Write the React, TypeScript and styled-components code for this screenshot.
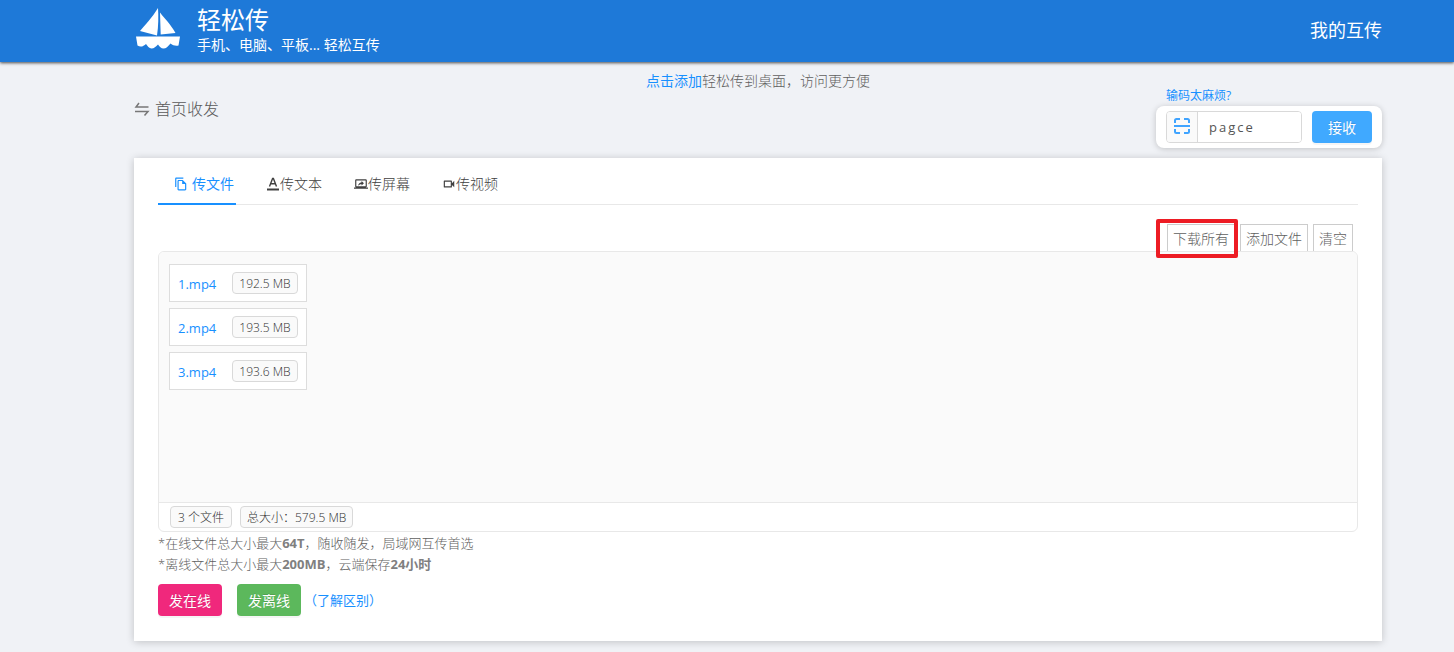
import React from 'react';
import styled, { createGlobalStyle } from 'styled-components';
import {
  MdOutlineFileCopy,
  MdOutlineScreenShare,
  MdOutlineVideocam,
} from 'react-icons/md';

const GlobalStyle = createGlobalStyle`
  *, *::before, *::after { box-sizing: border-box; }
  body {
    margin: 0;
    background: #f0f2f6;
    color: #595959;
    font-family: "Open Sans", "Noto Sans CJK SC", sans-serif;
    font-size: 14px;
    font-weight: 300;
    line-height: 22px;
  }
  a { color: #1890ff; font-weight: 400; text-decoration: none; }
  button, input { font-family: inherit; font-weight: inherit; }
`;

const Header = styled.header`
  display: flex;
  align-items: center;
  justify-content: space-between;
  height: 62px;
  padding: 0 72px 2px 134px;
  background: #1e79d8;
  color: #fff;
  box-shadow: 0 1px 3px rgba(0, 0, 0, 0.7);
`;

const Brand = styled.a`
  display: flex;
  align-items: center;
  gap: 15px;
  color: #fff;
`;

const BrandName = styled.div`
  font-size: 24px;
  line-height: 30px;
`;

const BrandNote = styled.div`
  font-size: 14px;
  line-height: 20px;
`;

const HeaderLink = styled.a`
  color: #fff;
  font-size: 18px;
  line-height: 28px;
`;

const Main = styled.main`
  padding: 8px 72px 11px 134px;
`;

const Notice = styled.p`
  margin: 0;
  text-align: center;
  color: #606060;
`;

const TopRow = styled.div`
  display: flex;
  justify-content: space-between;
  align-items: flex-start;
  margin-bottom: 10px;
`;

const Crumb = styled.h1`
  display: flex;
  align-items: center;
  gap: 5px;
  margin: 6px 0 0;
  font-size: 16px;
  font-weight: 300;
  line-height: 22px;
`;

const Receive = styled.form`
  margin-top: -6px;
`;

const HelpLink = styled.a`
  display: block;
  padding-left: 10px;
  font-size: 12px;
  line-height: 20px;
`;

const ReceiveBox = styled.div`
  display: flex;
  gap: 10px;
  padding: 5px 10px;
  border-radius: 8px;
  background: #fff;
  box-shadow: 0 1px 6px rgba(0, 0, 0, 0.2);
`;

const CodeGroup = styled.div`
  display: flex;
  width: 136px;
  height: 32px;
  border: 1px solid #d9d9d9;
  border-radius: 4px;
  overflow: hidden;
`;

const ScanButton = styled.button`
  display: flex;
  align-items: center;
  justify-content: center;
  flex: none;
  width: 31px;
  padding: 0 0 2px;
  border: 0;
  border-right: 1px solid #d9d9d9;
  background: #fafafa;
  color: #40a4ff;
`;

const CodeInput = styled.input`
  flex: 1;
  min-width: 0;
  padding: 0 11px;
  border: 0;
  outline: 0;
  background: #fff;
  color: #555;
  font-size: 13px;
  font-weight: 400;
  letter-spacing: 2px;
`;

const Button = styled.button<{ $color: string; $width: number }>`
  width: ${(p) => p.$width}px;
  height: 32px;
  padding: 2px 0 0;
  border: 0;
  border-radius: 4px;
  background: ${(p) => p.$color};
  color: #fff;
  font-size: 14px;
  font-weight: 400;
  line-height: 30px;
  text-shadow: 0 -1px 0 rgba(0, 0, 0, 0.12);
  box-shadow: 0 2px 0 rgba(0, 0, 0, 0.04);
`;

const Card = styled.section`
  padding: 6px 24px 25px;
  background: #fff;
  box-shadow: 0 1px 8px rgba(0, 0, 0, 0.2);
`;

const Tabs = styled.div`
  display: flex;
  gap: 32px;
  height: 41px;
  padding-left: 16px;
  border-bottom: 1px solid #e8e8e8;
`;

const Tab = styled.button<{ $active?: boolean }>`
  position: relative;
  display: flex;
  align-items: center;
  gap: ${(p) => (p.$active ? 4 : 0)}px;
  height: 41px;
  padding: 0 0 2px;
  border: 0;
  background: none;
  color: ${(p) => (p.$active ? '#1890ff' : '#404040')};
  font-size: 14px;
  font-weight: ${(p) => (p.$active ? 400 : 300)};
  line-height: 22px;

  &::after {
    content: '';
    display: ${(p) => (p.$active ? 'block' : 'none')};
    position: absolute;
    left: -16px;
    right: -2px;
    bottom: 0;
    height: 2px;
    background: #1890ff;
  }
`;

const Toolbar = styled.div`
  display: flex;
  justify-content: flex-end;
  gap: 5px;
  margin-top: 19px;
  padding-right: 5px;
`;

const ToolButton = styled.button`
  position: relative;
  height: 27px;
  padding: 2px 5px 0;
  border: 1px solid #ccc;
  border-bottom: 0;
  background: #fff;
  color: #606060;
  font-size: 14px;
  line-height: 24px;
`;

const Highlight = styled.span`
  position: absolute;
  top: -6px;
  left: -12px;
  width: 82px;
  height: 39px;
  border: 4px solid #ed1c24;
  border-radius: 2px;
  pointer-events: none;
`;

const Panel = styled.div`
  border: 1px solid #e8e8e8;
  border-radius: 6px;
  background: #fff;
  overflow: hidden;
`;

const FileList = styled.ul`
  display: flex;
  flex-direction: column;
  align-items: flex-start;
  gap: 6px;
  min-height: 251px;
  margin: 0;
  padding: 12px 10px;
  border-bottom: 1px solid #e8e8e8;
  background: #fafafa;
  list-style: none;
`;

const FileItem = styled.li`
  display: flex;
  align-items: center;
  gap: 16px;
  height: 38px;
  padding: 0 8px;
  border: 1px solid #ddd;
  background: #fff;
`;

const FileLink = styled.a`
  padding-top: 2px;
  font-size: 13px;
`;

const Tag = styled.span`
  min-width: 62px;
  height: 22px;
  padding: 1px 6px 0;
  border: 1px solid #d9d9d9;
  border-radius: 4px;
  background: #fafafa;
  color: #303030;
  font-size: 12px;
  line-height: 20px;
  text-align: center;
  white-space: nowrap;
`;

const Summary = styled.div`
  display: flex;
  gap: 8px;
  padding: 3px 11px;
`;

const Hints = styled.div`
  padding-top: 1px;
`;

const Hint = styled.p`
  margin: 0;
  color: #606060;
  font-size: 13px;
  line-height: 21px;

  b {
    color: #808080;
    font-weight: 700;
  }
`;

const Actions = styled.div`
  display: flex;
  align-items: center;
  gap: 15px;
  margin-top: 9px;
`;

const DiffLink = styled.a`
  margin-left: -12px;
  font-size: 13px;
`;

const BoatLogo = () => (
  <svg width="48" height="44" viewBox="0 0 48 44" fill="#fff" aria-hidden="true">
    <path d="M24 0C18 10 11 17 6 23L23 27.500C24.500 18 24.500 8 24 0Z" />
    <path d="M26 4.500L26.700 26.500L41.500 25C36.500 16 31 11 26 4.500Z" />
    <path d="M2 28.500H46L44.500 37.500C41.500 38 39 37.500 36.500 35.500C34 38.500 32 40.500 29.500 40.500C27 40.500 25.500 38.500 24 36.500C22 38.500 20 40.500 17.500 40.500C15 40.500 13.500 38 12 36C9.500 38.500 6.500 39.500 3.500 37.500Z" />
  </svg>
);

const SwapIcon = () => (
  <svg width="16" height="16" viewBox="0 0 16 16" fill="none" stroke="#777" aria-hidden="true">
    <path d="M5 2L2 6H14.500M1 10.500H14L10.500 14.500" strokeWidth="1.500" />
  </svg>
);

const ScanIcon = () => (
  <svg width="18" height="18" viewBox="0 0 18 18" fill="none" stroke="currentColor" strokeWidth="2" aria-hidden="true">
    <path d="M2 6V3.500Q2 2 3.500 2H7M11 2H14.500Q16 2 16 3.500V6M2 12V14.500Q2 16 3.500 16H7M11 16H14.500Q16 16 16 14.500V12M1 9H17" />
  </svg>
);

const TextIcon = ({ size }: { size: number }) => (
  <svg width={size} height={size} viewBox="0 0 14 14" fill="none" stroke="currentColor" aria-hidden="true">
    <path d="M3.500 9.500L6.600 1.500H7.400L10.500 9.500M4.700 6.800H9.300" strokeWidth="1.400" />
    <path d="M1 12.500H13" strokeWidth="2" />
  </svg>
);

const tabs = [
  { label: '传文件', Icon: MdOutlineFileCopy },
  { label: '传文本', Icon: TextIcon },
  { label: '传屏幕', Icon: MdOutlineScreenShare },
  { label: '传视频', Icon: MdOutlineVideocam },
];

const files = [
  { name: '1.mp4', size: '192.5 MB' },
  { name: '2.mp4', size: '193.5 MB' },
  { name: '3.mp4', size: '193.6 MB' },
];

export default function App() {
  return (
    <>
      <GlobalStyle />
      <Header>
        <Brand href="#">
          <BoatLogo />
          <div>
            <BrandName>轻松传</BrandName>
            <BrandNote>手机、电脑、平板... 轻松互传</BrandNote>
          </div>
        </Brand>
        <HeaderLink href="#mine">我的互传</HeaderLink>
      </Header>
      <Main>
        <Notice>
          <a href="#add">点击添加</a>轻松传到桌面，访问更方便
        </Notice>
        <TopRow>
          <Crumb>
            <SwapIcon />
            首页收发
          </Crumb>
          <Receive onSubmit={(e) => e.preventDefault()}>
            <HelpLink href="#scan">输码太麻烦?</HelpLink>
            <ReceiveBox>
              <CodeGroup>
                <ScanButton type="button" aria-label="扫码">
                  <ScanIcon />
                </ScanButton>
                <CodeInput aria-label="取件码" defaultValue="pagce" />
              </CodeGroup>
              <Button type="submit" $color="#40a9ff" $width={60}>接收</Button>
            </ReceiveBox>
          </Receive>
        </TopRow>
        <Card>
          <Tabs role="tablist">
            {tabs.map(({ label, Icon }, i) => (
              <Tab key={label} type="button" role="tab" aria-selected={i === 0} $active={i === 0}>
                <Icon size={14} />
                {label}
              </Tab>
            ))}
          </Tabs>
          <Toolbar>
            <ToolButton type="button">
              下载所有
              <Highlight />
            </ToolButton>
            <ToolButton type="button">添加文件</ToolButton>
            <ToolButton type="button">清空</ToolButton>
          </Toolbar>
          <Panel>
            <FileList>
              {files.map((f) => (
                <FileItem key={f.name}>
                  <FileLink href={`#${f.name}`}>{f.name}</FileLink>
                  <Tag>{f.size}</Tag>
                </FileItem>
              ))}
            </FileList>
            <Summary>
              <Tag>3 个文件</Tag>
              <Tag>总大小：579.5 MB</Tag>
            </Summary>
          </Panel>
          <Hints>
            <Hint>
              *在线文件总大小最大<b>64T</b>，随收随发，局域网互传首选
            </Hint>
            <Hint>
              *离线文件总大小最大<b>200MB</b>，云端保存<b>24小时</b>
            </Hint>
          </Hints>
          <Actions>
            <Button type="button" $color="#f0287c" $width={64}>发在线</Button>
            <Button type="button" $color="#5cb85c" $width={64}>发离线</Button>
            <DiffLink href="#diff">（了解区别）</DiffLink>
          </Actions>
        </Card>
      </Main>
    </>
  );
}
